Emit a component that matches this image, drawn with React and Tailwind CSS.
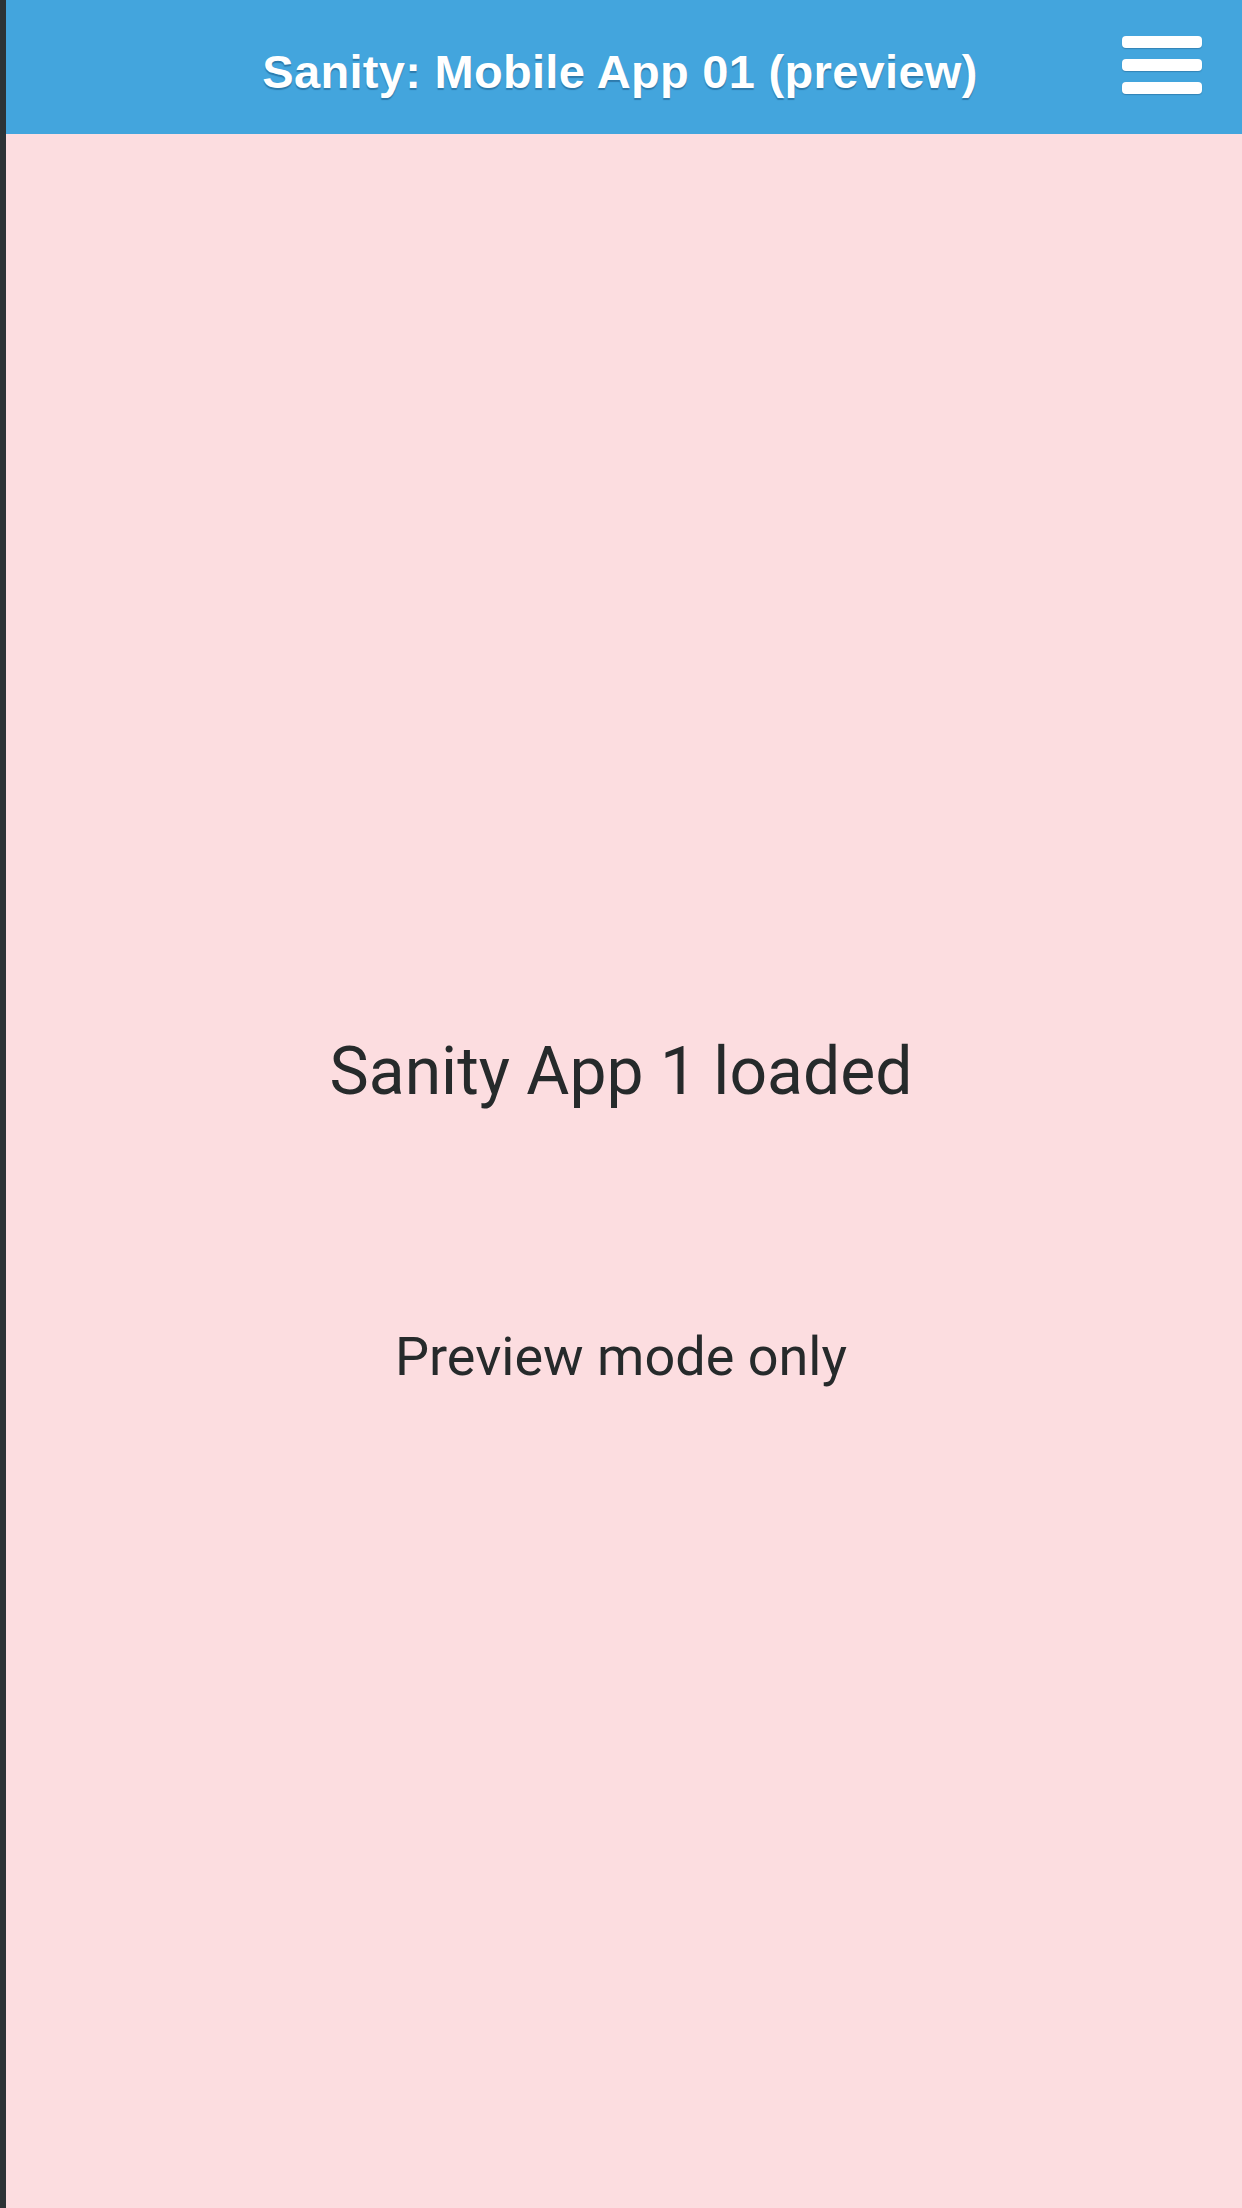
import React from "react";

export default function App() {
  return (
    <div className="flex min-h-[2208px] w-full bg-[#fcdde0]">
      <div className="w-[6px] shrink-0 bg-[#2c3336]" />
      <div className="flex min-w-0 flex-1 flex-col">
        <header className="grid h-[134px] grid-cols-[1fr_auto_1fr] items-center bg-[#43a5dd]">
          <div />
          <h1
            className="mr-[8px] mt-[8px] whitespace-nowrap text-[47px] font-bold leading-none tracking-[0.3px] text-white [text-shadow:0_2px_1px_rgba(20,70,110,0.45)]"
            style={{ fontFamily: '"Liberation Sans", Arial, sans-serif' }}
          >
            Sanity: Mobile App 01 (preview)
          </h1>
          <div className="flex justify-end pr-[40px]">
            <button className="mb-[4px] flex flex-col gap-[11px]" aria-label="Menu">
              <span className="block h-[12px] w-[80px] rounded-[4px] bg-white shadow-[0_1px_1px_rgba(20,70,110,0.35)]" />
              <span className="block h-[12px] w-[80px] rounded-[4px] bg-white shadow-[0_1px_1px_rgba(20,70,110,0.35)]" />
              <span className="block h-[12px] w-[80px] rounded-[4px] bg-white shadow-[0_1px_1px_rgba(20,70,110,0.35)]" />
            </button>
          </div>
        </header>
        <main
          className="flex flex-col items-center pr-[6px] pt-[905px] text-[#262a2b]"
          style={{ fontFamily: 'Roboto, "Noto Sans", sans-serif' }}
        >
          <p className="text-[66px] leading-none">Sanity App 1 loaded</p>
          <p className="mt-[225px] text-[54px] leading-none">Preview mode only</p>
        </main>
      </div>
    </div>
  );
}
